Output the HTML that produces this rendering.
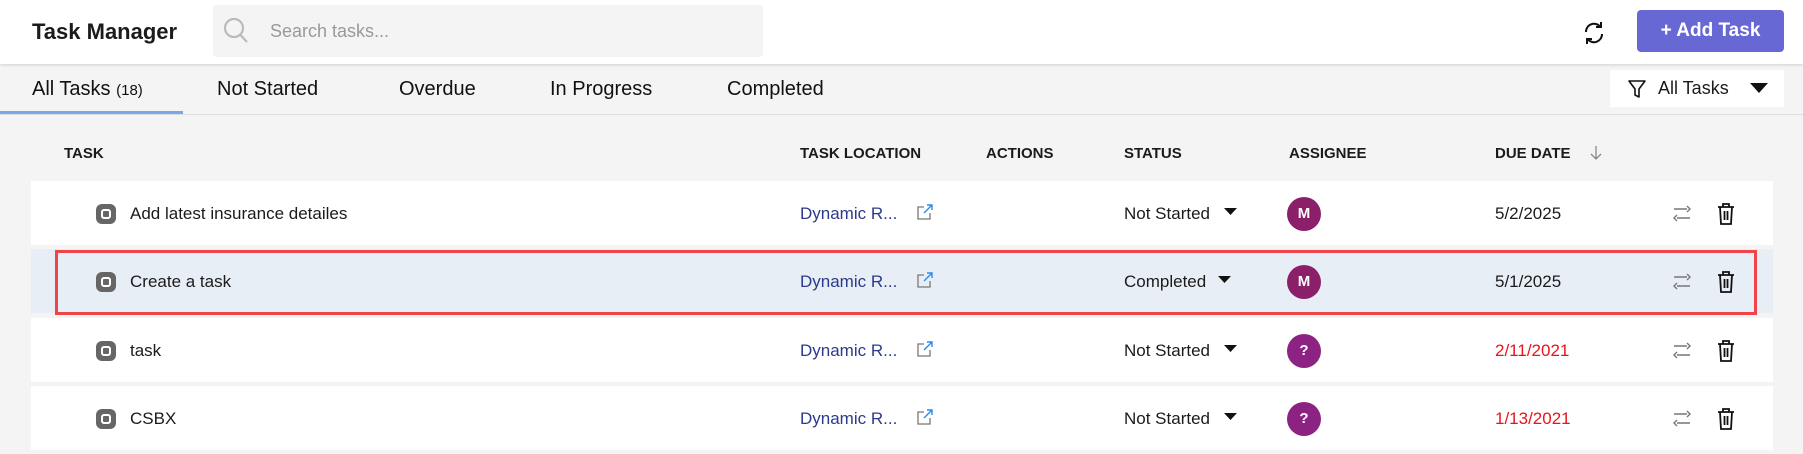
<!DOCTYPE html>
<html><head><meta charset="utf-8"><style>
*{box-sizing:border-box;margin:0;padding:0}
body{width:1803px;height:454px;overflow:hidden;background:#f4f4f4;font-family:"Liberation Sans",sans-serif;color:#1b1b1b;position:relative}
.abs{position:absolute}
.hdr{left:0;top:0;width:1803px;height:64px;background:#fff;box-shadow:0 1px 3px rgba(0,0,0,.15)}
.title{left:32px;top:19px;font-size:22px;font-weight:bold}
.search{left:213px;top:5px;width:550px;height:52px;background:#f4f4f4;border-radius:4px}
.tab{top:78px;font-size:20px;color:#111}
.th{top:145px;font-size:15px;font-weight:bold}
.row{left:31px;width:1742px;height:64px;background:#fff}
.cell{font-size:17px}
.av{width:34px;height:34px;border-radius:50%;background:#8b1f6a;color:#fff;font-weight:bold;font-size:15px;text-align:center;line-height:34px}
.chk{width:20px;height:20px;border-radius:6px;background:#666}
.chk:after{content:"";position:absolute;left:5px;top:5px;width:10px;height:10px;border:2px solid #fff;border-radius:3px;box-sizing:border-box}
</style></head><body>
<div class="abs hdr"></div>
<div class="abs title">Task Manager</div>
<div class="abs search"></div>
<svg class="abs" style="left:222px;top:16px" width="28" height="30" viewBox="0 0 28 30"><circle cx="12" cy="12" r="9" fill="none" stroke="#bbb" stroke-width="2.2"/><line x1="18.5" y1="19" x2="25" y2="26" stroke="#bbb" stroke-width="2.2"/></svg>
<div class="abs" style="left:270px;top:21px;font-size:18px;color:#999">Search tasks...</div>
<svg class="abs" style="left:1582px;top:19px" width="24" height="28" viewBox="0 0 24 28"><path d="M4 13a8 8 0 0 1 14-5.5M20 15a8 8 0 0 1-14 5.5" fill="none" stroke="#111" stroke-width="2"/><path d="M19 3v5h-5M5 25v-5h5" fill="none" stroke="#111" stroke-width="2"/></svg>
<div class="abs" style="left:1637px;top:10px;width:147px;height:42px;background:#6868d4;border-radius:4px;color:#fff;font-size:19px;font-weight:bold;line-height:42px;text-align:center">+ Add Task</div>

<div class="abs tab" style="left:32px">All Tasks <span style="font-size:15px">(18)</span></div>
<div class="abs tab" style="left:217px">Not Started</div>
<div class="abs tab" style="left:399px">Overdue</div>
<div class="abs tab" style="left:550px">In Progress</div>
<div class="abs tab" style="left:727px">Completed</div>
<div class="abs" style="left:0;top:114px;width:1803px;height:1px;background:#ddd"></div>
<div class="abs" style="left:0;top:111px;width:183px;height:3px;background:#7aa7ec"></div>
<div class="abs" style="left:1610px;top:70px;width:174px;height:37px;background:#fff"></div>
<svg class="abs" style="left:1627px;top:79px" width="20" height="20" viewBox="0 0 20 20"><path d="M2 2h16l-6 8v8l-4-2v-6z" fill="none" stroke="#111" stroke-width="1.6" stroke-linejoin="round"/></svg>
<div class="abs" style="left:1658px;top:78px;font-size:18px">All Tasks</div>
<svg class="abs" style="left:1750px;top:83px" width="18" height="12"><path d="M0 0h18L9 10z" fill="#111"/></svg>

<div class="abs th" style="left:64px">TASK</div>
<div class="abs th" style="left:800px">TASK LOCATION</div>
<div class="abs th" style="left:986px">ACTIONS</div>
<div class="abs th" style="left:1124px">STATUS</div>
<div class="abs th" style="left:1289px">ASSIGNEE</div>
<div class="abs th" style="left:1495px">DUE DATE</div>
<svg class="abs" style="left:1590px;top:145px" width="12" height="16"><path d="M6 1v13M1 9l5 5 5-5" fill="none" stroke="#888" stroke-width="1.3"/></svg>

<div class="abs row" style="top:181px"></div>
<div class="abs row" style="top:249px;background:#e8eef6"></div>
<div class="abs row" style="top:318px"></div>
<div class="abs row" style="top:386px"></div>
<div class="abs" style="left:55px;top:250px;width:1702px;height:65px;border:3px solid #f0444a"></div>

<div class="abs chk" style="left:96px;top:204px"></div>
<div class="abs chk" style="left:96px;top:272px"></div>
<div class="abs chk" style="left:96px;top:341px"></div>
<div class="abs chk" style="left:96px;top:409px"></div>
<div class="abs cell" style="left:130px;top:204px">Add latest insurance detailes</div>
<div class="abs cell" style="left:130px;top:272px">Create a task</div>
<div class="abs cell" style="left:130px;top:341px">task</div>
<div class="abs cell" style="left:130px;top:409px">CSBX</div>

<div class="abs cell" style="left:800px;top:204px;color:#2b3a8c">Dynamic R...</div>
<div class="abs cell" style="left:800px;top:272px;color:#2b3a8c">Dynamic R...</div>
<div class="abs cell" style="left:800px;top:341px;color:#2b3a8c">Dynamic R...</div>
<div class="abs cell" style="left:800px;top:409px;color:#2b3a8c">Dynamic R...</div>
<svg class="abs" style="left:916px;top:203px" width="18" height="18" viewBox="0 0 18 18"><path d="M8 4H2v12h12v-6" fill="none" stroke="#777" stroke-width="1.3"/><path d="M8 10l8-8M11 2h5v5" fill="none" stroke="#2a8be8" stroke-width="1.4"/></svg>
<svg class="abs" style="left:916px;top:271px" width="18" height="18" viewBox="0 0 18 18"><path d="M8 4H2v12h12v-6" fill="none" stroke="#777" stroke-width="1.3"/><path d="M8 10l8-8M11 2h5v5" fill="none" stroke="#2a8be8" stroke-width="1.4"/></svg>
<svg class="abs" style="left:916px;top:340px" width="18" height="18" viewBox="0 0 18 18"><path d="M8 4H2v12h12v-6" fill="none" stroke="#777" stroke-width="1.3"/><path d="M8 10l8-8M11 2h5v5" fill="none" stroke="#2a8be8" stroke-width="1.4"/></svg>
<svg class="abs" style="left:916px;top:408px" width="18" height="18" viewBox="0 0 18 18"><path d="M8 4H2v12h12v-6" fill="none" stroke="#777" stroke-width="1.3"/><path d="M8 10l8-8M11 2h5v5" fill="none" stroke="#2a8be8" stroke-width="1.4"/></svg>

<div class="abs cell" style="left:1124px;top:204px">Not Started</div>
<div class="abs cell" style="left:1124px;top:272px">Completed</div>
<div class="abs cell" style="left:1124px;top:341px">Not Started</div>
<div class="abs cell" style="left:1124px;top:409px">Not Started</div>
<svg class="abs" style="left:1224px;top:208px" width="13" height="8"><path d="M0 0h13L6.5 7z" fill="#111"/></svg>
<svg class="abs" style="left:1218px;top:276px" width="13" height="8"><path d="M0 0h13L6.5 7z" fill="#111"/></svg>
<svg class="abs" style="left:1224px;top:345px" width="13" height="8"><path d="M0 0h13L6.5 7z" fill="#111"/></svg>
<svg class="abs" style="left:1224px;top:413px" width="13" height="8"><path d="M0 0h13L6.5 7z" fill="#111"/></svg>

<div class="abs av" style="left:1287px;top:197px">M</div>
<div class="abs av" style="left:1287px;top:265px">M</div>
<div class="abs av" style="left:1287px;top:334px;background:#8c2383">?</div>
<div class="abs av" style="left:1287px;top:402px;background:#8c2383">?</div>

<div class="abs cell" style="left:1495px;top:204px">5/2/2025</div>
<div class="abs cell" style="left:1495px;top:272px">5/1/2025</div>
<div class="abs cell" style="left:1495px;top:341px;color:#e8131b">2/11/2021</div>
<div class="abs cell" style="left:1495px;top:409px;color:#e8131b">1/13/2021</div>

<svg class="abs" style="left:1671px;top:203px" width="22" height="22" viewBox="0 0 22 22"><path d="M3 6h13M16 3l3 3-3 3M19 15H6M6 12l-3 3 3 3" fill="none" stroke="#777" stroke-width="1.4"/></svg>
<svg class="abs" style="left:1671px;top:271px" width="22" height="22" viewBox="0 0 22 22"><path d="M3 6h13M16 3l3 3-3 3M19 15H6M6 12l-3 3 3 3" fill="none" stroke="#777" stroke-width="1.4"/></svg>
<svg class="abs" style="left:1671px;top:340px" width="22" height="22" viewBox="0 0 22 22"><path d="M3 6h13M16 3l3 3-3 3M19 15H6M6 12l-3 3 3 3" fill="none" stroke="#777" stroke-width="1.4"/></svg>
<svg class="abs" style="left:1671px;top:408px" width="22" height="22" viewBox="0 0 22 22"><path d="M3 6h13M16 3l3 3-3 3M19 15H6M6 12l-3 3 3 3" fill="none" stroke="#777" stroke-width="1.4"/></svg>

<svg class="abs" style="left:1716px;top:202px" width="20" height="24" viewBox="0 0 20 24"><path d="M2 5h16M7 5V2h6v3M4 5l1 17h10l1-17M8.5 9v9M11.5 9v9" fill="none" stroke="#111" stroke-width="1.8"/></svg>
<svg class="abs" style="left:1716px;top:270px" width="20" height="24" viewBox="0 0 20 24"><path d="M2 5h16M7 5V2h6v3M4 5l1 17h10l1-17M8.5 9v9M11.5 9v9" fill="none" stroke="#111" stroke-width="1.8"/></svg>
<svg class="abs" style="left:1716px;top:339px" width="20" height="24" viewBox="0 0 20 24"><path d="M2 5h16M7 5V2h6v3M4 5l1 17h10l1-17M8.5 9v9M11.5 9v9" fill="none" stroke="#111" stroke-width="1.8"/></svg>
<svg class="abs" style="left:1716px;top:407px" width="20" height="24" viewBox="0 0 20 24"><path d="M2 5h16M7 5V2h6v3M4 5l1 17h10l1-17M8.5 9v9M11.5 9v9" fill="none" stroke="#111" stroke-width="1.8"/></svg>
</body></html>
